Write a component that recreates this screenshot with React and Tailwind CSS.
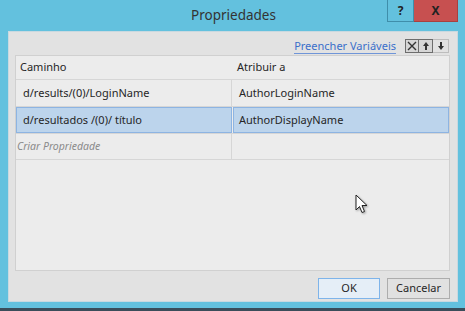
import { useState } from 'react'

function Cursor() {
  return (
    <svg width="14" height="21" viewBox="0 0 14 21" className="drop-shadow-[1px_1px_1px_rgba(0,0,0,0.35)]">
      <path d="M1 1 L1 16 L4.5 12.5 L7 18.5 L9.5 17.5 L7 11.5 L12 11.5 Z" fill="#fff" stroke="#222" strokeWidth="1" strokeLinejoin="round" />
    </svg>
  )
}

export default function App() {
  const [selected] = useState(1)
  const rows = [
    { path: 'd/results/(0)/LoginName', attr: 'AuthorLoginName' },
    { path: 'd/resultados /(0)/ título', attr: 'AuthorDisplayName' },
  ]

  return (
    <div className="w-[465px] h-[311px] flex flex-col bg-[#63c1de] overflow-hidden text-[#262626]" style={{ fontFamily: '"Noto Sans", "Open Sans", sans-serif' }}>
      {/* title bar */}
      <div className="h-[31px] flex-shrink-0 flex relative">
        <div className="flex-1 flex items-center justify-center pl-[2px] pb-[1px] text-[13.5px] text-[#333]">Propriedades</div>
        <div className="absolute right-[7px] top-0 flex">
          <div className="w-[27px] h-[22px] border border-[#3f8eaa] border-t-0 bg-[#63c1de] flex items-center justify-center text-[12px] font-bold text-[#222]">?</div>
          <div className="w-[44px] h-[22px] bg-[#c75050] border border-[#a84040] border-t-0 border-l-0 flex items-center justify-center text-[12px] font-bold text-[#222]">X</div>
        </div>
      </div>

      {/* dialog body */}
      <div className="ml-[8px] mr-[7px] h-[271px] flex-shrink-0 bg-[#e2e2e2] border border-[#c9d9e0] flex flex-col">
        <div className="h-[23px] flex items-start justify-end pr-[8px] pt-[7px] gap-[9px]">
          <span className="text-[11px] leading-[13px] text-[#3a6fca] border-b border-[#6f95d8] pb-[1px]">Preencher Variáveis</span>
          <div className="flex">
            <div className="w-[14px] h-[14px] border border-[#6d6d6d] bg-[#d6d6d6] flex items-center justify-center">
              <svg width="10" height="10" viewBox="0 0 10 10"><path d="M1 1 L9 9 M9 1 L1 9" stroke="#333" strokeWidth="1.4" /></svg>
            </div>
            <div className="w-[14px] h-[14px] border border-l-0 border-[#6d6d6d] bg-[#d6d6d6] flex items-center justify-center">
              <svg width="8" height="10" viewBox="0 0 8 10"><path d="M4 1 L1 5 L3 5 L3 9 L5 9 L5 5 L7 5 Z" fill="#333" /></svg>
            </div>
            <div className="w-[16px] h-[14px] border border-l-0 border-[#bdbdbd] bg-[#e2e2e2] flex items-center justify-center">
              <svg width="8" height="10" viewBox="0 0 8 10"><path d="M4 9 L1 5 L3 5 L3 1 L5 1 L5 5 L7 5 Z" fill="#333" /></svg>
            </div>
          </div>
        </div>

        {/* table */}
        <div className="ml-[6px] mr-[7px] h-[216px] bg-[#ececec] border border-[#d0d0d0] flex flex-col text-[11px]">
          <div className="h-[24px] flex items-center border-b border-[#d6d6d6]">
            <div className="w-[216px] pl-[4px]">Caminho</div>
            <div className="pl-[5px]">Atribuir a</div>
          </div>
          {rows.map((r, i) => {
            const sel = i === selected
            return (
              <div key={i} className="h-[27px] flex border-b border-[#d6d6d6]">
                <div className={sel ? 'w-[216px] flex items-center pl-[6px] bg-[#bcd4ec] border border-[#8db4e2]' : 'w-[216px] flex items-center pl-[7px] border-r border-[#d6d6d6]'}>{r.path}</div>
                <div className={sel ? 'flex-1 flex items-center pl-[5px] ml-[1px] bg-[#bcd4ec] border border-[#8db4e2]' : 'flex-1 flex items-center pl-[7px]'}>{r.attr}</div>
              </div>
            )
          })}
          <div className="h-[26px] flex border-b border-[#d6d6d6]">
            <div className="w-[216px] flex items-center pl-[1px] border-r border-[#d6d6d6] italic text-[10.5px] text-[#8a8a8a]">Criar Propriedade</div>
            <div className="flex-1" />
          </div>
          <div className="flex-1 relative">
            <div className="absolute left-[339px] top-[34px]"><Cursor /></div>
          </div>
        </div>

        <div className="flex-1 flex items-start justify-end pr-[7px] pt-[7px] gap-[7px] text-[11px]">
          <div className="w-[62px] h-[21px] border border-[#7eb4ea] bg-[#e5eef7] flex items-center justify-center">OK</div>
          <div className="w-[63px] h-[21px] border border-[#adadad] bg-[#e1e1e1] flex items-center justify-center">Cancelar</div>
        </div>
      </div>

      <div className="flex-1" />
      <div className="h-[3px] bg-[#3a4d5a]" />
    </div>
  )
}
